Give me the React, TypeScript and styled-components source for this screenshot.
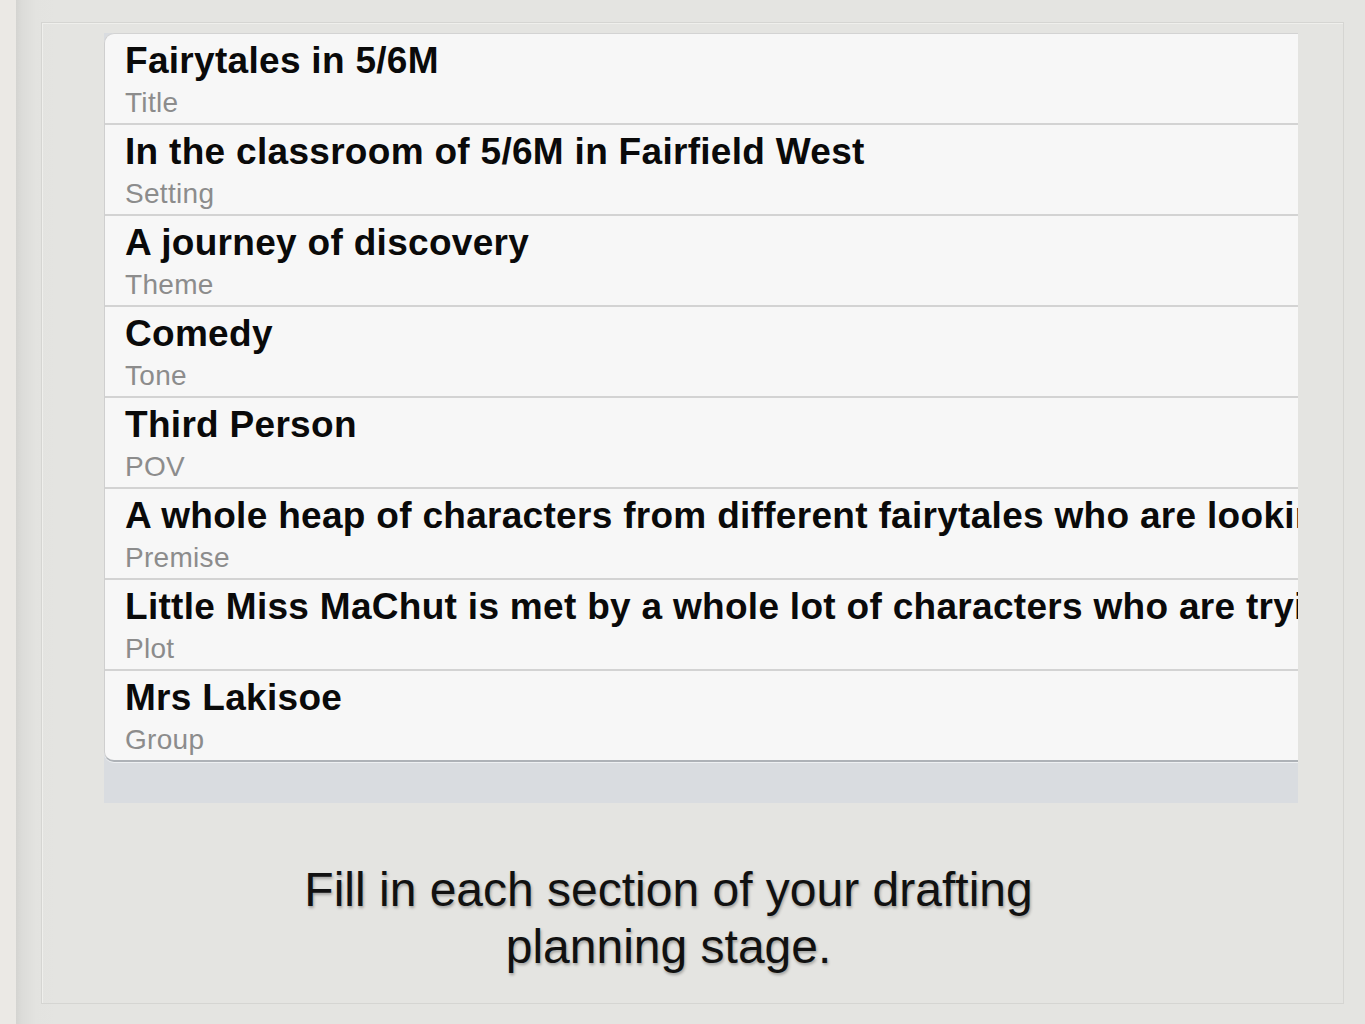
import React from "react";
import styled, { createGlobalStyle } from "styled-components";

const GlobalStyle = createGlobalStyle`
  html, body {
    margin: 0;
    padding: 0;
    background: #e4e4e1;
  }
  body {
    font-family: "Liberation Sans", Arial, sans-serif;
  }
`;

const Page = styled.div`
  width: 1365px;
  height: 1024px;
  display: flex;
  overflow: hidden;
  background:
    repeating-linear-gradient(0deg, rgba(255,255,255,0.18) 0px, rgba(255,255,255,0.18) 1px, rgba(0,0,0,0.015) 2px, rgba(0,0,0,0.015) 3px),
    #e4e4e1;
`;

const LeftStrip = styled.div`
  width: 16px;
  flex-shrink: 0;
  background: #ebe9e5;
`;

const SlideArea = styled.div`
  flex: 1;
  min-width: 0;
  padding: 22px 21px 20px 25px;
  background: linear-gradient(90deg, #d4d4d1 0px, #dcdcd9 6px, #e3e3e0 20px, #e4e4e1 40px);
  box-sizing: border-box;
  display: flex;
`;

const Frame = styled.div`
  flex: 1;
  min-width: 0;
  overflow: hidden;
  border: 1px solid #d5d5d2;
  box-shadow: inset 1px 1px 0 #efefec;
  padding: 10px 45px 0 62px;
  box-sizing: border-box;
  display: flex;
  flex-direction: column;
`;

const Panel = styled.div`
  display: flex;
  flex-direction: column;
  min-width: 0;
  overflow: hidden;
  background: #d9dce0;
`;

const Card = styled.div`
  background: #f7f7f7;
  border-top: 1px solid #d3d3d3;
  border-left: 1px solid #cfcfcf;
  border-bottom: 2px solid #aeb2b7;
  border-radius: 10px 0 0 10px;
  overflow: hidden;
  box-shadow: 0 1px 0 #eef0f2;
`;

const Row = styled.div<{ $last?: boolean }>`
  height: ${(p) => (p.$last ? 89 : 91)}px;
  padding: 7px 0 0 20px;
  box-sizing: border-box;
  border-bottom: ${(p) => (p.$last ? "0" : "2px solid #d3d3d3")};
  white-space: nowrap;
  overflow: hidden;
`;

const Value = styled.div`
  font-family: "Liberation Sans", Arial, sans-serif;
  font-weight: bold;
  font-size: 37px;
  line-height: 40px;
  letter-spacing: 0.3px;
  color: #0a0a0a;
`;

const Label = styled.div`
  font-family: "Liberation Sans", Arial, sans-serif;
  font-size: 28px;
  line-height: 32px;
  letter-spacing: 0.3px;
  margin-top: 6px;
  color: #8c8c8c;
`;

const BottomBar = styled.div`
  height: 41px;
`;

const Caption = styled.div`
  margin-top: 58px;
  padding-right: 65px;
  text-align: center;
  font-family: "Liberation Sans", Arial, sans-serif;
  font-size: 48px;
  line-height: 57px;
  color: #111111;
  text-shadow: 1px 2px 3px rgba(0, 0, 0, 0.3);
`;

const rows = [
  { value: "Fairytales in 5/6M", label: "Title" },
  { value: "In the classroom of 5/6M in Fairfield West", label: "Setting" },
  { value: "A journey of discovery", label: "Theme" },
  { value: "Comedy", label: "Tone" },
  { value: "Third Person", label: "POV" },
  {
    value:
      "A whole heap of characters from different fairytales who are looking for a happy ending",
    label: "Premise",
  },
  {
    value:
      "Little Miss MaChut is met by a whole lot of characters who are trying to find their way home",
    label: "Plot",
  },
  { value: "Mrs Lakisoe", label: "Group" },
];

export default function App() {
  return (
    <>
      <GlobalStyle />
      <Page>
        <LeftStrip />
        <SlideArea>
          <Frame>
            <Panel>
              <Card>
                {rows.map((r, i) => (
                  <Row key={r.label} $last={i === rows.length - 1}>
                    <Value>{r.value}</Value>
                    <Label>{r.label}</Label>
                  </Row>
                ))}
              </Card>
              <BottomBar />
            </Panel>
            <Caption>
              Fill in each section of your drafting
              <br />
              planning stage.
            </Caption>
          </Frame>
        </SlideArea>
      </Page>
    </>
  );
}
